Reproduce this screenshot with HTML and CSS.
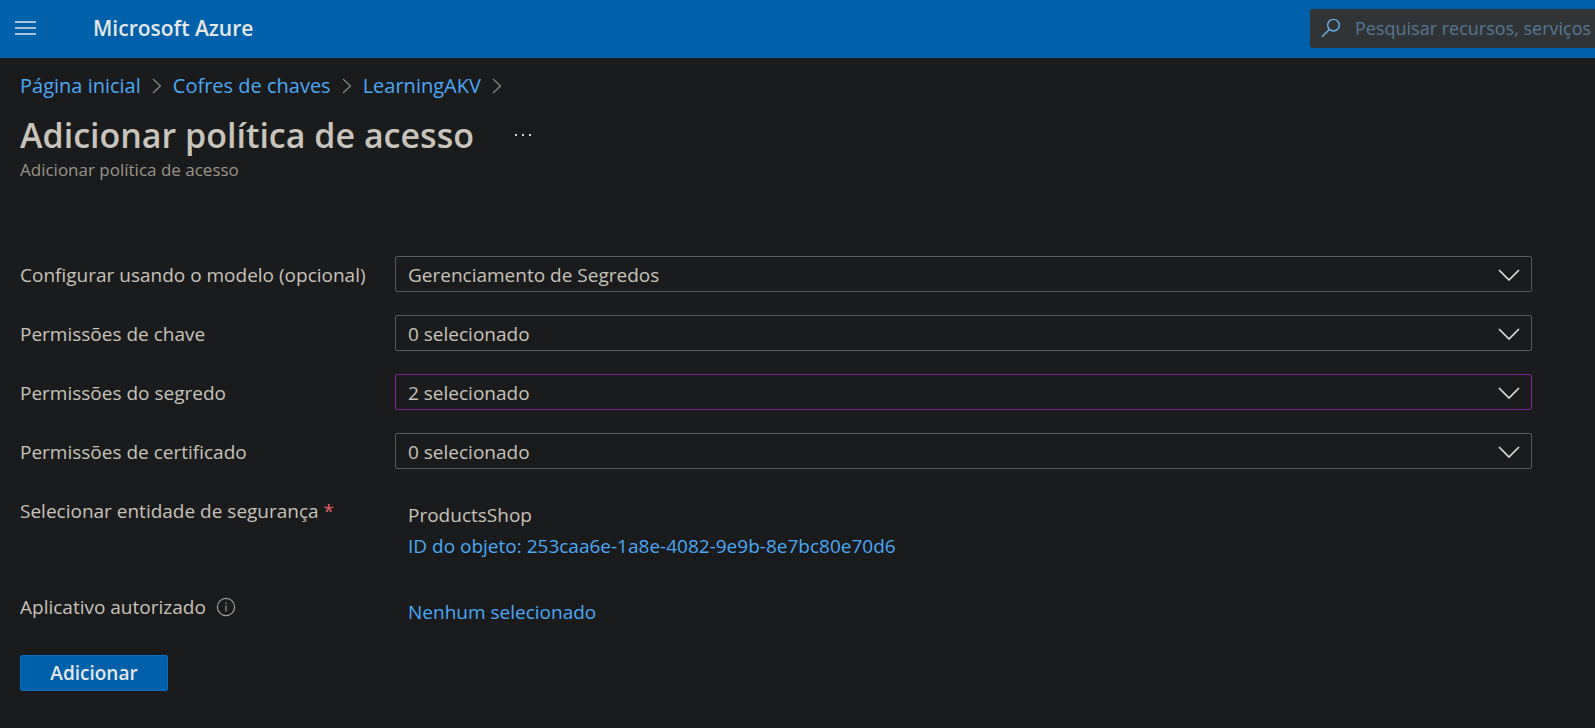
FILE: index.html
```html
<!DOCTYPE html>
<html lang="pt-BR">
<head>
<meta charset="utf-8">
<title>Adicionar política de acesso - Microsoft Azure</title>
<link rel="stylesheet" href="styles.css">
</head>
<body>
<header class="topbar">
  <button class="menu-button" type="button" aria-label="Menu">
    <svg width="22" height="16" viewBox="0 0 22 16" fill="none" stroke="currentColor" stroke-width="2"><path d="M0 2h21M0 8h21M0 14h21"/></svg>
  </button>
  <a class="brand" href="#">Microsoft Azure</a>
  <label class="search">
    <svg class="search-icon" width="20" height="20" viewBox="0 0 20 20" fill="none" stroke="currentColor" stroke-width="1.4"><circle cx="12.5" cy="7.2" r="5.8"/><path d="M8.4 11.4L1 18.8"/></svg>
    <input class="search-input" type="text" aria-label="Pesquisar" placeholder="Pesquisar recursos, serviços">
  </label>
</header>
<main class="page">
  <nav class="breadcrumb" aria-label="Navegação estrutural">
    <a class="link" href="#">Página inicial</a>
    <svg class="crumb-arrow" width="10" height="16" viewBox="0 0 10 16" fill="none" stroke="currentColor" stroke-width="1.2"><path d="M1 1l7.5 7L1 15"/></svg>
    <a class="link" href="#">Cofres de chaves</a>
    <svg class="crumb-arrow" width="10" height="16" viewBox="0 0 10 16" fill="none" stroke="currentColor" stroke-width="1.2"><path d="M1 1l7.5 7L1 15"/></svg>
    <a class="link" href="#">LearningAKV</a>
    <svg class="crumb-arrow" width="10" height="16" viewBox="0 0 10 16" fill="none" stroke="currentColor" stroke-width="1.2"><path d="M1 1l7.5 7L1 15"/></svg>
  </nav>
  <div class="title-row">
    <h1 class="title">Adicionar política de acesso</h1>
    <button class="more-button" type="button" aria-label="Mais">
      <svg width="18" height="4" viewBox="0 0 18 4" fill="currentColor"><path d="M1 1h2v2H1zM8 1h2v2H8zM15 1h2v2h-2z"/></svg>
    </button>
  </div>
  <p class="subtitle">Adicionar política de acesso</p>

  <form class="form">
    <label class="label" for="template">Configurar usando o modelo (opcional)</label>
    <div class="dropdown">
      <select class="select" id="template"><option>Gerenciamento de Segredos</option></select>
      <svg class="chevron" width="22" height="14" viewBox="0 0 22 14" fill="none" stroke="currentColor" stroke-width="1.7"><path d="M1 3l10 10L21 3"/></svg>
    </div>
    <label class="label" for="key">Permissões de chave</label>
    <div class="dropdown">
      <select class="select" id="key"><option>0 selecionado</option></select>
      <svg class="chevron" width="22" height="14" viewBox="0 0 22 14" fill="none" stroke="currentColor" stroke-width="1.7"><path d="M1 3l10 10L21 3"/></svg>
    </div>
    <label class="label" for="secret">Permissões do segredo</label>
    <div class="dropdown">
      <select class="select select-changed" id="secret"><option>2 selecionado</option></select>
      <svg class="chevron" width="22" height="14" viewBox="0 0 22 14" fill="none" stroke="currentColor" stroke-width="1.7"><path d="M1 3l10 10L21 3"/></svg>
    </div>
    <label class="label" for="certificate">Permissões de certificado</label>
    <div class="dropdown">
      <select class="select" id="certificate"><option>0 selecionado</option></select>
      <svg class="chevron" width="22" height="14" viewBox="0 0 22 14" fill="none" stroke="currentColor" stroke-width="1.7"><path d="M1 3l10 10L21 3"/></svg>
    </div>
    <div class="label">Selecionar entidade de segurança <span class="required">*</span></div>
    <div class="value">
      <span>ProductsShop</span>
      <a class="link" href="#">ID do objeto: 253caa6e-1a8e-4082-9e9b-8e7bc80e70d6</a>
    </div>
    <div class="label label-info">Aplicativo autorizado
      <svg class="info" width="20" height="20" viewBox="0 0 20 20" fill="none" stroke="currentColor" stroke-width="1.2"><circle cx="10" cy="10" r="8.6"/><path d="M10 8.5v6M10 5.5v1.6"/></svg>
    </div>
    <div class="value">
      <a class="link" href="#">Nenhum selecionado</a>
    </div>
    <button class="submit" type="button">Adicionar</button>
  </form>
</main>
</body>
</html>
```
FILE: styles.css
```css
* {
  box-sizing: border-box;
}

body {
  margin: 0;
  background: #1a1b1c;
  color: #c8c3bb;
  font-family: "Open Sans", "Noto Sans", sans-serif;
  font-size: 19px;
}

button,
input,
select {
  font: inherit;
}

.link {
  color: #4aa9f5;
  text-decoration: none;
}

.topbar {
  display: flex;
  align-items: center;
  height: 58px;
  padding-bottom: 2px;
  background: #0060aa;
}

.menu-button,
.more-button {
  display: flex;
  padding: 0;
  border: 0;
  background: none;
  color: #a9c4da;
}

.menu-button {
  margin-left: 15px;
}

.brand {
  margin-left: 56px;
  color: #e6e6e6;
  font-size: 21px;
  font-weight: 600;
  text-decoration: none;
}

.search {
  display: flex;
  align-items: center;
  gap: 14px;
  width: 285px;
  height: 39px;
  margin-left: auto;
  padding-left: 11px;
  border-radius: 3px 0 0 3px;
  background: #313436;
}

.search-icon {
  flex: none;
  color: #6cb2ea;
}

.search-input {
  flex: 1;
  min-width: 0;
  padding: 0;
  border: 0;
  outline: 0;
  background: none;
  color: #c8c3bb;
  font-size: 18px;
}

.search-input::placeholder {
  color: #547794;
  opacity: 1;
}

.page {
  padding: 14px 63px 36px 20px;
}

.breadcrumb {
  display: flex;
  align-items: center;
  gap: 11px;
  font-size: 20px;
  line-height: 28px;
}

.crumb-arrow {
  color: #8f8b85;
}

.title-row {
  display: flex;
  align-items: center;
  gap: 40px;
  margin-top: 11px;
}

.title {
  margin: 0;
  font-size: 34px;
  font-weight: 600;
  line-height: 48px;
}

.more-button {
  color: #d8d6d2;
}

.subtitle {
  margin: 0;
  color: #9a948b;
  font-size: 17px;
  line-height: 22px;
}

.form {
  display: grid;
  grid-template-columns: 375px 1fr;
  row-gap: 23px;
  align-items: start;
  margin-top: 75px;
}

.label {
  line-height: 38px;
  height: 36px;
}

.label-info {
  display: flex;
  align-items: center;
  gap: 10px;
}

.info {
  color: #a19c94;
}

.required {
  color: #e0606a;
}

.dropdown {
  display: grid;
  align-items: center;
}

.select {
  grid-area: 1 / 1;
  width: 100%;
  height: 36px;
  padding: 2px 48px 0 12px;
  border: 1px solid #5a5d60;
  border-radius: 2px;
  appearance: none;
  background: #1a1b1c;
  color: inherit;
}

.select-changed {
  border-color: #82249c;
}

.chevron {
  grid-area: 1 / 1;
  justify-self: end;
  margin-right: 12px;
  color: #dedcd8;
  pointer-events: none;
}

.value {
  display: flex;
  flex-direction: column;
  align-items: flex-start;
  padding: 8px 13px 4px;
  line-height: 31px;
}

.submit {
  width: 148px;
  height: 36px;
  padding: 0;
  border: 1px solid #0a6cbd;
  border-radius: 2px;
  background: #0060aa;
  color: #e6e6e6;
  font-weight: 600;
}
```
